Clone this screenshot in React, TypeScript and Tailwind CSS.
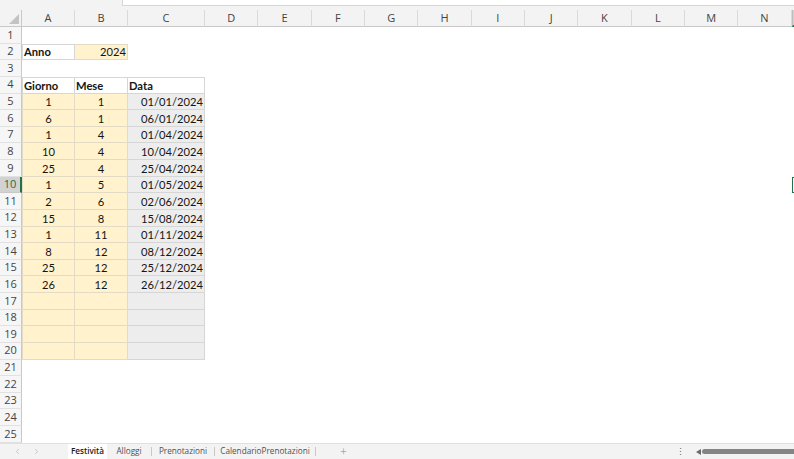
import { ChevronLeft, ChevronRight } from "lucide-react";

const COLS = ["A", "B", "C", "D", "E", "F", "G", "H", "I", "J", "K", "L", "M", "N", ""];

const festivita: [number, number, string][] = [
  [1, 1, "01/01/2024"],
  [6, 1, "06/01/2024"],
  [1, 4, "01/04/2024"],
  [10, 4, "10/04/2024"],
  [25, 4, "25/04/2024"],
  [1, 5, "01/05/2024"],
  [2, 6, "02/06/2024"],
  [15, 8, "15/08/2024"],
  [1, 11, "01/11/2024"],
  [8, 12, "08/12/2024"],
  [25, 12, "25/12/2024"],
  [26, 12, "26/12/2024"],
];

type Kind = "none" | "white" | "yellow" | "gray";
type CellInfo = { text?: string; bold?: boolean; align?: "left" | "center" | "right"; kind: Kind };

function getCell(row: number, col: number): CellInfo {
  if (row === 2) {
    if (col === 0) return { text: "Anno", bold: true, kind: "white" };
    if (col === 1) return { text: "2024", align: "right", kind: "yellow" };
  }
  if (row === 4 && col < 3) {
    return { text: ["Giorno", "Mese", "Data"][col], bold: true, kind: "white" };
  }
  if (row >= 5 && row <= 20 && col < 3) {
    const d = festivita[row - 5];
    const kind: Kind = col === 2 ? "gray" : "yellow";
    if (!d) return { kind };
    return {
      text: String(d[col]),
      align: col === 2 ? "right" : "center",
      kind,
    };
  }
  return { kind: "none" };
}

function Cell({ row, col }: { row: number; col: number }) {
  const c = getCell(row, col);
  const selected = row === 10 && col === 14;

  if (selected) {
    return <div className="border-[1.5px] border-[#217346] bg-white" />;
  }

  if (c.kind === "none") return <div />;

  const bg =
    c.kind === "yellow"
      ? "bg-[#fff2cc] border-[#e3dbc4]"
      : c.kind === "gray"
        ? "bg-[#ededed] border-[#d6d6d6]"
        : "bg-white border-[#d6d6d6]";
  const align = c.align === "right" ? "justify-end" : c.align === "center" ? "justify-center" : "justify-start";
  const top = row === 2 || row === 4 ? "border-t" : "";
  const left = col === 0 ? "border-l" : "";

  return (
    <div className={`flex items-end border-r border-b px-[1px] leading-[15px] ${bg} ${align} ${top} ${left}`}>
      <span className={`text-[11.2px] text-[#151515] ${c.bold ? "font-bold" : ""}`}>{c.text}</span>
    </div>
  );
}

function Tab({ label, active, width }: { label: string; active?: boolean; width: string }) {
  if (active) {
    return (
      <div className={`flex h-full items-center justify-center bg-white ${width}`}>
        <span className="relative font-semibold text-[#1a1a1a]">
          {label}
          <span className="absolute left-0 right-0 -bottom-[3px] h-[2px] rounded-full bg-[#1e6c41]" />
        </span>
      </div>
    );
  }
  return (
    <div className={`flex h-full items-center ${width}`}>
      <span className="flex-1 text-center text-[#505050]">{label}</span>
      <span className="h-[9px] w-px bg-[#c8c8c8]" />
    </div>
  );
}

export default function App() {
  const rows = Array.from({ length: 25 }, (_, i) => i + 1);

  return (
    <div className="flex h-[459px] w-[794px] flex-col overflow-hidden bg-white font-['Lato',sans-serif]">
      {/* formula bar edge */}
      <div className="h-[10px] shrink-0 bg-[#f3f3f3]">
        <div className="ml-[122px] h-[6px] border-b border-l border-[#d6d6d6] bg-white" />
      </div>

      {/* sheet grid */}
      <div className="grid h-[433px] shrink-0 grid-cols-[22px_53px_53px_77px_repeat(11,53.33px)_53.33px] grid-rows-[17px_repeat(25,16.64px)] overflow-hidden">
        <div className="relative border-b border-r border-[#c8c8c8] bg-[#f3f3f3]">
          <svg className="absolute bottom-[2px] right-[2px]" width="10" height="10" viewBox="0 0 10 10">
            <polygon points="10,0 10,10 0,10" fill="#c3c3c3" />
          </svg>
        </div>
        {COLS.map((l, i) => (
          <div
            key={i}
            className={`flex items-center justify-center border-r font-['Open_Sans',sans-serif] text-[11px] ${
              i === 14
                ? "border-b-2 border-l border-b-[#217346] border-l-[#bdbdbd] border-r-[#c8c8c8] bg-[#d2d2d2] text-[#1e6c41]"
                : "border-b border-[#c8c8c8] border-r-[#dadada] bg-[#f3f3f3] text-[#444]"
            }`}
          >
            {l}
          </div>
        ))}
        {rows.map((r) => (
          <div key={r} className="contents">
            <div
              className={`flex items-center justify-center border-b font-['Open_Sans',sans-serif] text-[11px] ${
                r === 10
                  ? "border-r-2 border-r-[#217346] border-b-[#c8c8c8] bg-[#d2d2d2] text-[#1e6c41]"
                  : "border-r border-r-[#c8c8c8] border-b-[#e1e1e1] bg-[#f6f6f6] text-[#444]"
              }`}
            >
              {r}
            </div>
            {COLS.map((_, c) => (
              <Cell key={c} row={r} col={c} />
            ))}
          </div>
        ))}
      </div>

      {/* sheet tabs */}
      <div className="flex h-[16px] shrink-0 items-center border-t border-[#e0e0e0] bg-[#f3f3f3] font-['Open_Sans',sans-serif] text-[8.2px]">
        <div className="flex w-[68px] items-center text-[#a6a6a6]">
          <ChevronLeft size={9} strokeWidth={1.5} className="ml-[13px]" />
          <ChevronRight size={9} strokeWidth={1.5} className="ml-[10px]" />
        </div>
        <Tab label="Festività" active width="w-[39px]" />
        <Tab label="Alloggi" width="w-[45px]" />
        <Tab label="Prenotazioni" width="w-[63px]" />
        <Tab label="CalendarioPrenotazioni" width="w-[101px]" />
        <span className="ml-[24px] text-[12px] font-light leading-none text-[#888]">+</span>
        <div className="ml-auto flex items-center">
          <span className="mr-[11px] text-[9px] leading-none text-[#666]">⋮</span>
          <svg width="5" height="6" viewBox="0 0 5 6" className="mr-[1px]">
            <polygon points="5,0 5,6 0,3" fill="#6a6a6a" />
          </svg>
          <div className="h-[5px] w-[92px] rounded-l-full bg-[#858585]" />
        </div>
      </div>
    </div>
  );
}
